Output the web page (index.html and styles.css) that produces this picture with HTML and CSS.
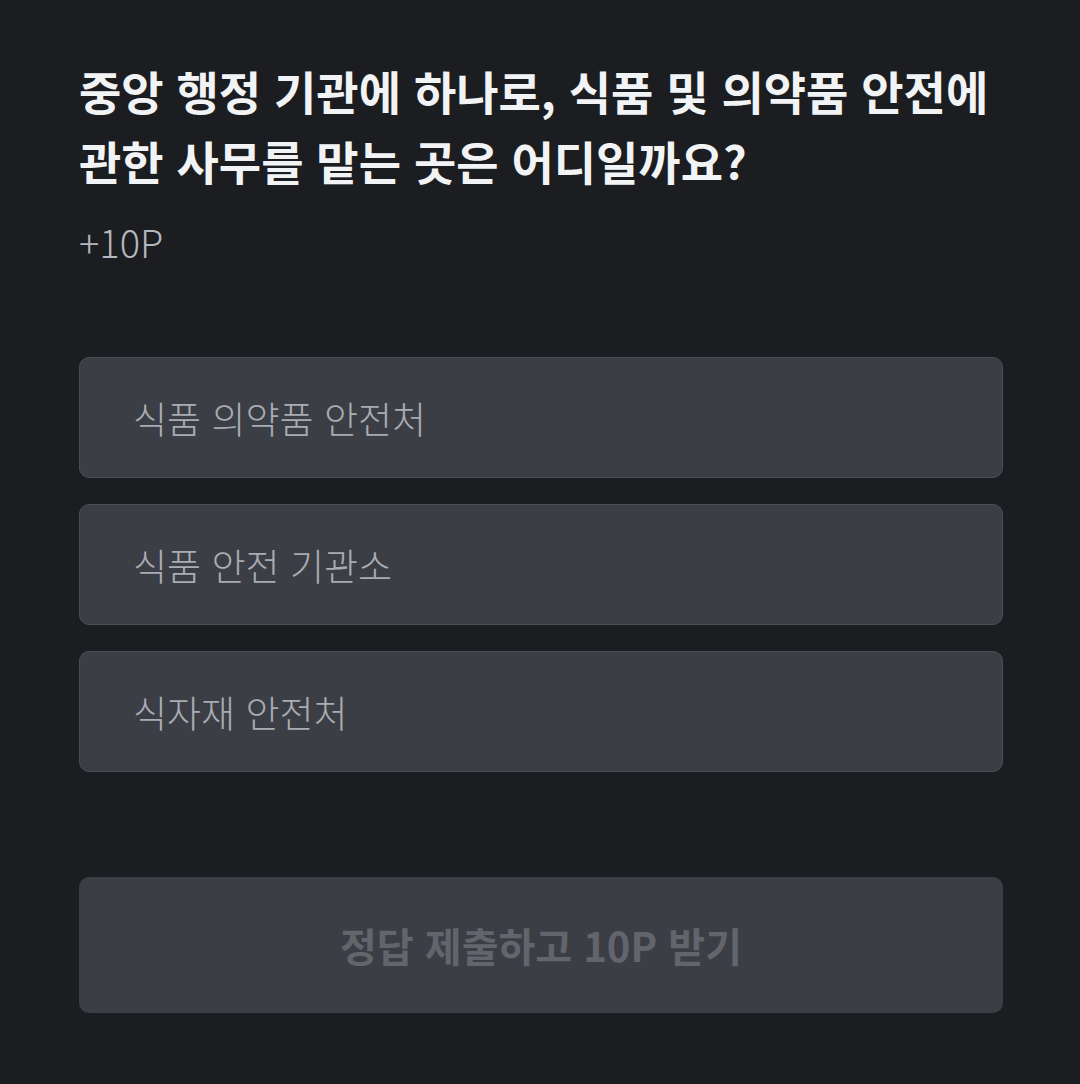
FILE: index.html
```html
<!DOCTYPE html>
<html lang="ko">
  <head>
    <meta charset="UTF-8" />
    <meta name="viewport" content="width=device-width, initial-scale=1.0" />
    <title>퀴즈</title>
    <link rel="stylesheet" href="styles.css">
  </head>
  <body>
    <div class="quiz-container">
      <h1 class="question">중앙 행정 기관에 하나로, 식품 및 의약품 안전에 관한 사무를 맡는 곳은 어디일까요?</h1>
      <p class="reward">+10P</p>

      <div class="options">
        <button class="option">식품 의약품 안전처</button>
        <button class="option">식품 안전 기관소</button>
        <button class="option">식자재 안전처</button>
      </div>

      <button class="submit-btn" disabled>정답 제출하고 10P 받기</button>
    </div>
  </body>
</html>
```

FILE: styles.css
```css
body {
  font-family: "Noto Sans CJK KR", "Noto Sans", sans-serif;
  margin: 0;
  padding: 0;
  background-color: #1c1d20;
  color: #f2f3f5;
}

.quiz-container {
  padding: 55px 77px 0 79px;
}

.question {
  font-size: 46px;
  font-weight: 700;
  line-height: 70px;
  margin: 0;
  word-break: keep-all;
}

.reward {
  font-size: 38px;
  font-weight: 300;
  color: #b4b7bd;
  margin: 22px 0 0;
  line-height: 50px;
}

.options {
  display: flex;
  flex-direction: column;
  gap: 26px;
  margin-top: 90px;
}

.option {
  font-family: inherit;
  height: 121px;
  padding: 0 0 0 53px;
  text-align: left;
  background-color: #3c3e45;
  border: 1px solid #4b4d54;
  border-radius: 10px;
  color: #a9acb3;
  font-size: 37px;
  font-weight: 300;
}

.submit-btn {
  font-family: inherit;
  display: block;
  width: 100%;
  height: 136px;
  margin-top: 105px;
  background-color: #3c3e45;
  border: none;
  border-radius: 10px;
  color: #62656c;
  font-size: 40px;
  font-weight: 700;
}
```
